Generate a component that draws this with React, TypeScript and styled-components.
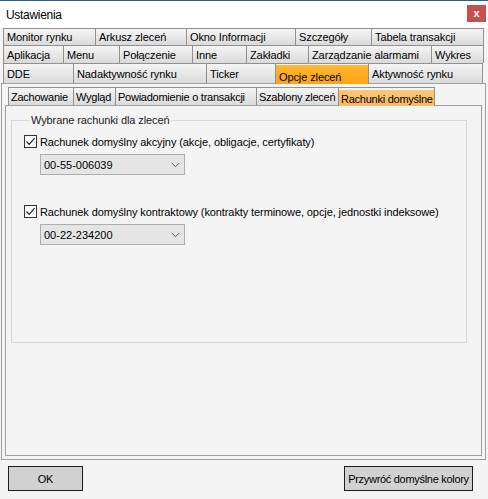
import React from 'react';
import styled, { createGlobalStyle } from 'styled-components';

const Global = createGlobalStyle`
  html, body { margin: 0; padding: 0; background: #f4f4f4; }
  body {
    font-family: "Liberation Sans", Arial, sans-serif;
    font-size: 11px;
    color: #000;
  }
  * { box-sizing: border-box; }
`;

const Window = styled.div`
  width: 488px;
  height: 499px;
  display: flex;
  flex-direction: column;
  background: #f4f4f4;
  border-top: 1px solid #2d5d8c;
  overflow: hidden;
`;

const TitleBar = styled.div`
  height: 27px;
  background: #fff;
  display: flex;
  align-items: center;
  justify-content: space-between;
  padding: 0 2px 0 6px;
`;

const Title = styled.span`
  font-size: 12px;
  letter-spacing: -0.3px;
  color: #000;
`;

const CloseButton = styled.div`
  width: 19px;
  height: 17px;
  margin-top: -2px;
  background: #c84f4f;
  color: #fff;
  display: flex;
  align-items: center;
  justify-content: center;
  font-size: 11px;
  font-weight: bold;
  line-height: 1;
`;

const TabRows = styled.div`
  display: flex;
  flex-direction: column;
  padding-left: 3px;
`;

const TabRow = styled.div<{ $h: number }>`
  display: flex;
  height: ${p => p.$h}px;
`;

const Tab = styled.div<{ $w: number; $active?: boolean; $shift: number; $pad: number }>`
  width: ${p => p.$w}px;
  flex: none;
  display: flex;
  align-items: center;
  padding-left: ${p => p.$pad}px;
  padding-top: ${p => (p.$active ? p.$shift : 0)}px;
  border-top: 1px solid #909090;
  border-left: 1px solid #909090;
  white-space: nowrap;
  letter-spacing: -0.1px;
  color: #000;
  background: ${p =>
    p.$active
      ? 'linear-gradient(#f4f4f4 0 1px, #ffb733 1px, #ffa412)'
      : 'linear-gradient(#f5f5f5, #e6e6e6 55%, #dadada)'};
  ${p =>
    p.$active
      ? `
    position: relative;
    z-index: 1;
    margin-bottom: -1px;
    border-right: 1px solid #909090;
    margin-right: -1px;
  `
      : ''}
  &:last-child {
    border-right: 1px solid #909090;
  }
`;

const InnerTab = styled(Tab)`
  letter-spacing: -0.25px;
  background: ${p =>
    p.$active
      ? 'linear-gradient(#f4f4f4 0 2px, #fdc87a 2px, #fbb963)'
      : 'linear-gradient(#f5f5f5, #e6e6e6 55%, #dadada)'};
`;

const OuterPanel = styled.div`
  margin-left: 1px;
  width: 485px;
  height: 377px;
  border: 1px solid #a0a0a0;
  padding: 3px;
  display: flex;
  flex-direction: column;
  background: #f4f4f4;
`;

const InnerTabRow = styled.div`
  display: flex;
  height: 18px;
  padding-left: 3px;
`;

const InnerPanel = styled.div`
  flex: 1;
  border: 1px solid #a0a0a0;
  background: #f4f4f4;
  padding: 8px 0 0 5px;
`;

const GroupBox = styled.fieldset`
  margin: 0;
  width: 456px;
  height: 229px;
  border: 1px solid #d8d8d8;
  padding: 0 0 0 12px;
  display: flex;
  flex-direction: column;
`;

const Legend = styled.legend`
  padding: 0 2px;
  margin-left: 5px;
  line-height: 13px;
  letter-spacing: -0.1px;
  color: #1a1a1a;
`;

const CheckRow = styled.label<{ $top: number }>`
  display: flex;
  align-items: center;
  gap: 3px;
  margin-top: ${p => p.$top}px;
  height: 13px;
  letter-spacing: -0.1px;
  color: #000;
`;

const CheckBox = styled.span`
  width: 13px;
  height: 13px;
  border: 1px solid #333;
  background: #fff;
  display: flex;
  align-items: center;
  justify-content: center;
  flex: none;
`;

const Combo = styled.div`
  margin-top: 6px;
  margin-left: 16px;
  width: 145px;
  height: 21px;
  background: #e5e5e5;
  border: 1px solid #adadad;
  display: flex;
  align-items: center;
  justify-content: space-between;
  padding: 0 4px 0 3px;
  color: #000;
`;

const Footer = styled.div`
  display: flex;
  justify-content: space-between;
  padding: 6px 15px 0 8px;
`;

const Button = styled.div<{ $w: number }>`
  width: ${p => p.$w}px;
  height: 25px;
  background: #d1d1d1;
  border: 1px solid #1e1e1e;
  display: flex;
  align-items: center;
  justify-content: center;
  font-size: 11px;
  letter-spacing: -0.3px;
  color: #000;
`;

const Check = () => (
  <svg width="11" height="11" viewBox="0 0 11 11">
    <path d="M1.5 5.5 L4.2 8.3 L9.6 2.2" fill="none" stroke="#222" strokeWidth="1.2" />
  </svg>
);

const Chevron = () => (
  <svg width="9" height="6" viewBox="0 0 9 6">
    <path d="M0.8 1 L4.5 4.7 L8.2 1" fill="none" stroke="#555" strokeWidth="1" />
  </svg>
);

type T = [string, number, boolean?];

const rows: { h: number; tabs: T[] }[] = [
  {
    h: 17,
    tabs: [
      ['Monitor rynku', 92],
      ['Arkusz zleceń', 91],
      ['Okno Informacji', 109],
      ['Szczegóły', 76],
      ['Tabela transakcji', 113],
    ],
  },
  {
    h: 18,
    tabs: [
      ['Aplikacja', 60],
      ['Menu', 56],
      ['Połączenie', 73],
      ['Inne', 54],
      ['Zakładki', 62],
      ['Zarządzanie alarmami', 123],
      ['Wykres', 53],
    ],
  },
  {
    h: 20,
    tabs: [
      ['DDE', 70],
      ['Nadaktywność rynku', 133],
      ['Ticker', 69],
      ['Opcje zleceń', 94, true],
      ['Aktywność rynku', 115],
    ],
  },
];

const innerTabs: T[] = [
  ['Zachowanie', 65],
  ['Wygląd', 42],
  ['Powiadomienie o transakcji', 141],
  ['Szablony zleceń', 82],
  ['Rachunki domyślne', 97, true],
];

export default function App() {
  return (
    <>
      <Global />
      <Window>
        <TitleBar>
          <Title>Ustawienia</Title>
          <CloseButton>x</CloseButton>
        </TitleBar>
        <TabRows>
          {rows.map((r, i) => (
            <TabRow key={i} $h={r.h}>
              {r.tabs.map(([label, w, active]) => (
                <Tab key={label} $w={w} $active={active} $shift={5} $pad={3}>
                  {label}
                </Tab>
              ))}
            </TabRow>
          ))}
        </TabRows>
        <OuterPanel>
          <InnerTabRow>
            {innerTabs.map(([label, w, active]) => (
              <InnerTab key={label} $w={w} $active={active} $shift={4} $pad={2}>
                {label}
              </InnerTab>
            ))}
          </InnerTabRow>
          <InnerPanel>
            <GroupBox>
              <Legend>Wybrane rachunki dla zleceń</Legend>
              <CheckRow $top={8}>
                <CheckBox>
                  <Check />
                </CheckBox>
                Rachunek domyślny akcyjny (akcje, obligacje, certyfikaty)
              </CheckRow>
              <Combo>
                <span>00-55-006039</span>
                <Chevron />
              </Combo>
              <CheckRow $top={30}>
                <CheckBox>
                  <Check />
                </CheckBox>
                Rachunek domyślny kontraktowy (kontrakty terminowe, opcje, jednostki indeksowe)
              </CheckRow>
              <Combo>
                <span>00-22-234200</span>
                <Chevron />
              </Combo>
            </GroupBox>
          </InnerPanel>
        </OuterPanel>
        <Footer>
          <Button $w={75}>OK</Button>
          <Button $w={129}>Przywróć domyślne kolory</Button>
        </Footer>
      </Window>
    </>
  );
}
